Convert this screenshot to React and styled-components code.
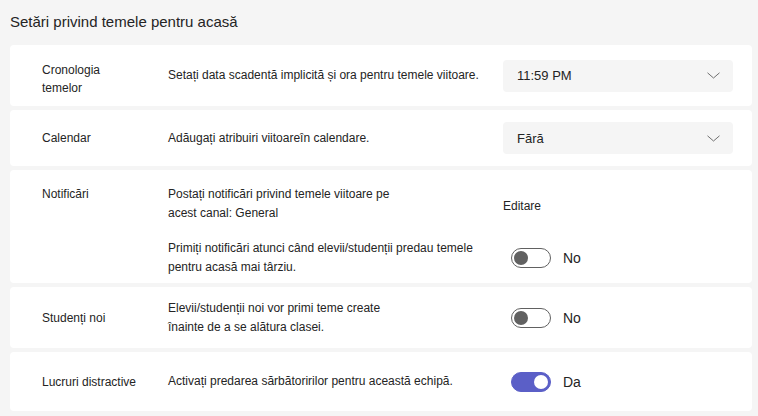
import React, { useState } from 'react';
import styled, { createGlobalStyle } from 'styled-components';

const GlobalStyle = createGlobalStyle`
  html, body {
    margin: 0;
    padding: 0;
    background: #f5f5f5;
  }
  body {
    font-family: "Segoe UI", "Liberation Sans", Arial, sans-serif;
    color: #242424;
  }
`;

const Page = styled.div`
  padding: 12px 6px 5px 10px;
  display: flex;
  flex-direction: column;
`;

const Title = styled.h1`
  margin: 0 0 13px;
  font-size: 15px;
  font-weight: 400;
  line-height: 20px;
  color: #242424;
`;

const CardList = styled.div`
  display: flex;
  flex-direction: column;
  gap: 4px;
`;

const Card = styled.section`
  background: #fff;
  border-radius: 4px;
  display: grid;
  grid-template-columns: 126px 1fr;
  align-items: ${(p) => (p.$top ? 'start' : 'center')};
  min-height: ${(p) => p.$h || 56}px;
  padding: ${(p) => (p.$top ? '15px 0 6px 32px' : '0 0 0 32px')};
  box-sizing: border-box;
  font-size: 12px;
`;

const Label = styled.div`
  line-height: 18px;
  padding-top: ${(p) => p.$shift || 0}px;
`;

const Rows = styled.div`
  display: flex;
  flex-direction: column;
  gap: 16px;
`;

const Row = styled.div`
  display: grid;
  grid-template-columns: 335px 230px;
  align-items: center;
`;

const Desc = styled.div`
  line-height: 19px;
`;

const Select = styled.div`
  height: 32px;
  background: #f5f5f5;
  border-radius: 4px;
  display: flex;
  align-items: center;
  justify-content: space-between;
  padding: 0 13px 0 14px;
  font-size: 13px;
`;

const Chevron = () => (
  <svg width="13" height="7" viewBox="0 0 13 7">
    <path d="M0.5 0.8 L6.5 6 L12.5 0.8" fill="none" stroke="#707070" strokeWidth="1" />
  </svg>
);

const SwitchWrap = styled.label`
  display: flex;
  align-items: center;
  gap: 12px;
  padding-left: 8px;
  font-size: 14px;
  cursor: pointer;
`;

const Track = styled.span`
  width: 40px;
  height: 20px;
  box-sizing: border-box;
  border-radius: 10px;
  border: 1px solid ${(p) => (p.$on ? '#5b5fc7' : '#616161')};
  background: ${(p) => (p.$on ? '#5b5fc7' : '#fff')};
  position: relative;
`;

const Knob = styled.span`
  position: absolute;
  top: 2px;
  left: ${(p) => (p.$on ? '22px' : '2px')};
  width: 14px;
  height: 14px;
  border-radius: 50%;
  background: ${(p) => (p.$on ? '#fff' : '#616161')};
`;

const EditLink = styled.div`
  font-size: 12px;
  padding-top: 3px;
`;

function Toggle({ initial }) {
  const [on, setOn] = useState(initial);
  return (
    <SwitchWrap onClick={() => setOn(!on)}>
      <Track $on={on}>
        <Knob $on={on} />
      </Track>
      {on ? 'Da' : 'No'}
    </SwitchWrap>
  );
}

export default function App() {
  return (
    <>
      <GlobalStyle />
      <Page>
        <Title>Setări privind temele pentru acasă</Title>
        <CardList>
          <Card $h={61}>
            <Label $shift={6}>Cronologia<br />temelor</Label>
            <Row>
              <Desc>Setați data scadentă implicită și ora pentru temele viitoare.</Desc>
              <Select>11:59 PM<Chevron /></Select>
            </Row>
          </Card>

          <Card $h={56}>
            <Label>Calendar</Label>
            <Row>
              <Desc>Adăugați atribuiri viitoareîn calendare.</Desc>
              <Select>Fără<Chevron /></Select>
            </Row>
          </Card>

          <Card $top $h={113}>
            <Label>Notificări</Label>
            <Rows>
              <Row>
                <Desc>Postați notificări privind temele viitoare pe<br />acest canal: General</Desc>
                <EditLink>Editare</EditLink>
              </Row>
              <Row>
                <Desc>Primiți notificări atunci când elevii/studenții predau temele<br />pentru acasă mai târziu.</Desc>
                <Toggle initial={false} />
              </Row>
            </Rows>
          </Card>

          <Card $h={61}>
            <Label>Studenți noi</Label>
            <Row>
              <Desc>Elevii/studenții noi vor primi teme create<br />înainte de a se alătura clasei.</Desc>
              <Toggle initial={false} />
            </Row>
          </Card>

          <Card $h={59}>
            <Label>Lucruri distractive</Label>
            <Row>
              <Desc>Activați predarea sărbătoririlor pentru această echipă.</Desc>
              <Toggle initial={true} />
            </Row>
          </Card>
        </CardList>
      </Page>
    </>
  );
}
